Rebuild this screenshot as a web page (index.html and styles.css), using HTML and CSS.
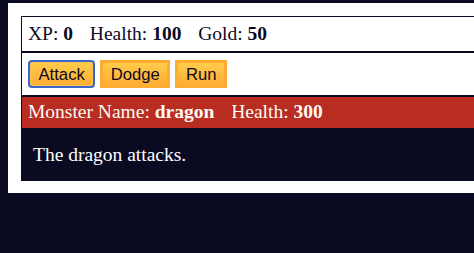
FILE: index.html
```
<!DOCTYPE html>
<html lang="en">
<head>
<meta charset="utf-8">
<title>RPG - Dragon Repeller</title>
<link rel="stylesheet" href="styles.css">
</head>
<body>
<div class="game">
  <div class="stats">
    <span class="stat">XP: <strong>0</strong></span>
    <span class="stat">Health: <strong>100</strong></span>
    <span class="stat">Gold: <strong>50</strong></span>
  </div>
  <div class="controls">
    <button class="btn btn-focus">Attack</button>
    <button class="btn">Dodge</button>
    <button class="btn">Run</button>
  </div>
  <div class="monster-stats">
    <span class="stat">Monster Name: <strong>dragon</strong></span>
    <span class="stat">Health: <strong>300</strong></span>
  </div>
  <div class="text">The dragon attacks.</div>
</div>
</body>
</html>
```
FILE: styles.css
```
html, body {
  margin: 0;
  padding: 0;
}
body {
  background-color: #0a0a23;
  font-family: "Liberation Serif", "Times New Roman", serif;
  font-size: 19.5px;
  height: 253px;
  overflow: hidden;
}
.game {
  width: 625px;
  margin: 3px 0 0 8px;
  padding: 13px 13px 12px;
  background-color: #ffffff;
}
.stats, .controls {
  border: 1px solid #0a0a23;
  padding: 6px;
  color: #0a0a23;
  line-height: 22px;
}
.controls {
  padding: 7px 6px 6px;
  height: 29px;
  display: flex;
  gap: 5px;
  align-items: flex-start;
}
.stat {
  padding-right: 12px;
}
.btn {
  font-family: "Liberation Sans", Arial, sans-serif;
  font-size: 16.67px;
  color: #0a0a23;
  background-color: #feac32;
  background-image: linear-gradient(#fecc4c, #ffac33);
  border: 3.5px solid #feac32;
  padding: 1px 7.5px;
  height: 28px;
  line-height: 19px;
  margin: 0;
  cursor: pointer;
}
.btn-focus {
  border: 2.5px solid #3d66c4;
  border-radius: 4px;
  padding: 1px 8.5px;
  box-shadow: inset 0 0 0 1px #f7c35a;
}
.monster-stats {
  border: 1px solid #0a0a23;
  padding: 4px 6px 5px;
  line-height: 22px;
  color: #fffaf2;
  background-color: #b82c22;
}
.text {
  background-color: #0a0a23;
  color: #ffffff;
  padding: 14px 12px;
  line-height: 24px;
}
```
